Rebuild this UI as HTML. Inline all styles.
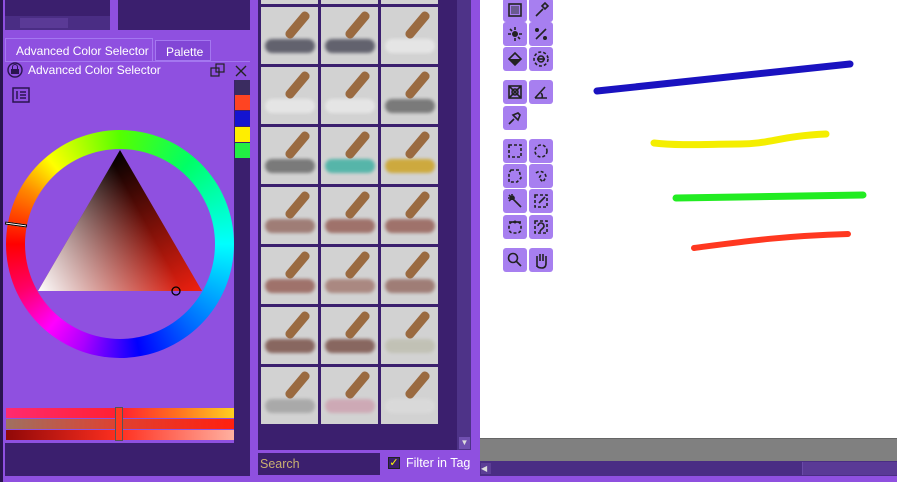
<!DOCTYPE html>
<html><head><meta charset="utf-8"><style>
*{margin:0;padding:0;box-sizing:border-box}
body{width:897px;height:482px;overflow:hidden;background:#8f50e0;position:relative;font-family:"Liberation Sans","DejaVu Sans",sans-serif}
.a{position:absolute}
.dk{background:#3b1f6e}
.tile{position:absolute;width:57px;height:57px;background:#d2d2d2;overflow:hidden}
.tb{position:absolute;width:24px;height:24px;background:#a77ff0;border-radius:3px}
.tb svg{position:absolute;left:3px;top:3px}
</style></head><body>
<div class="a" style="left:0;top:0;width:3px;height:482px;background:#2a1450"></div>
<div class="a dk" style="left:5px;top:0;width:105px;height:16px"></div>
<div class="a" style="left:5px;top:16px;width:105px;height:14px;background:#4a2d84"></div>
<div class="a" style="left:20px;top:18px;width:48px;height:10px;background:#5a3a96"></div>
<div class="a dk" style="left:118px;top:0;width:132px;height:30px"></div>
<div class="a" style="left:5px;top:38px;width:148px;height:24px;background:#8f50e0;border:1px solid #a477f0;border-bottom:none;color:#fff;font-size:12px;padding:5px 0 0 10px;white-space:nowrap">Advanced Color Selector</div>
<div class="a" style="left:155px;top:40px;width:56px;height:21px;background:#8246d6;border:1px solid #a477f0;color:#fff;font-size:12px;padding:4px 0 0 10px;white-space:nowrap">Palette</div>
<div class="a" style="left:5px;top:61px;width:245px;height:1px;background:#a477f0"></div>
<svg class="a" style="left:5px;top:61px" width="20" height="20"><circle cx="10" cy="9" r="7" fill="none" stroke="#2a1450" stroke-width="1.4"/><rect x="6" y="8" width="8" height="5" fill="#2a1450"/><path d="M7.5 8V6a2.5 2.5 0 015 0v2" fill="none" stroke="#2a1450"/></svg>
<div class="a" style="left:28px;top:63px;color:#fff;font-size:12px;white-space:nowrap">Advanced Color Selector</div>
<svg class="a" style="left:210px;top:63px" width="16" height="14"><rect x="1" y="5" width="8" height="8" fill="none" stroke="#222" stroke-width="1.2"/><rect x="6" y="1" width="8" height="8" fill="none" stroke="#222" stroke-width="1.2"/></svg>
<svg class="a" style="left:234px;top:64px" width="14" height="14"><path d="M2 2L12 12M12 2L2 12" stroke="#222" stroke-width="1.4"/></svg>
<svg class="a" style="left:12px;top:87px" width="18" height="16"><rect x="1" y="1" width="16" height="14" fill="none" stroke="#2a1450" stroke-width="1.5"/><path d="M5 4v8M8 5h6M8 8h6M8 11h6" stroke="#2a1450" stroke-width="1.5"/></svg>
<div class="a dk" style="left:234px;top:80px;width:16px;height:365px"></div>
<div class="a" style="left:235px;top:80px;width:15px;height:15px;background:#3a2c60"></div>
<div class="a" style="left:235px;top:95px;width:15px;height:15px;background:#ff4422"></div>
<div class="a" style="left:235px;top:111px;width:15px;height:15px;background:#1414d0"></div>
<div class="a" style="left:235px;top:127px;width:15px;height:15px;background:#ffee00"></div>
<div class="a" style="left:235px;top:143px;width:15px;height:15px;background:#22ee44"></div>
<div class="a" style="left:6px;top:130px;width:228px;height:228px;border-radius:50%;background:conic-gradient(from 0deg,#5f0 0deg,#0f6 40deg,#0ff 90deg,#06f 140deg,#00f 170deg,#a0f 200deg,#f0f 220deg,#f06 245deg,#f00 270deg,#f80 300deg,#ff0 320deg,#af0 340deg,#5f0 360deg)"></div>
<div class="a" style="left:25px;top:149px;width:190px;height:190px;border-radius:50%;background:#8f50e0"></div>
<div class="a" style="left:5px;top:223px;width:22px;height:3px;background:#fff;transform:rotate(8deg);border:1px solid #000"></div>
<svg class="a" style="left:0;top:0" width="250" height="400">
<defs>
<linearGradient id="g1" x1="120" y1="150" x2="202" y2="291" gradientUnits="userSpaceOnUse"><stop offset="0" stop-color="#000"/><stop offset="1" stop-color="#f02010"/></linearGradient>
<linearGradient id="g2" x1="38" y1="291" x2="150" y2="230" gradientUnits="userSpaceOnUse"><stop offset="0" stop-color="#fff"/><stop offset="1" stop-color="#fff" stop-opacity="0"/></linearGradient>
</defs>
<polygon points="120,150 38,291 202,291" fill="url(#g1)"/>
<polygon points="120,150 38,291 202,291" fill="url(#g2)"/>
<circle cx="176" cy="291" r="4" fill="none" stroke="#000" stroke-width="1.3"/>
</svg>
<div class="a" style="left:6px;top:408px;width:228px;height:10px;background:linear-gradient(90deg,#ff2a70,#ff2030 50%,#ff7020 75%,#ffd020)"></div>
<div class="a" style="left:6px;top:419px;width:228px;height:10px;background:linear-gradient(90deg,#a07060,#e04030 50%,#ff2010)"></div>
<div class="a" style="left:6px;top:430px;width:228px;height:10px;background:linear-gradient(90deg,#900808,#ff3020 50%,#ffb0a0)"></div>
<div class="a" style="left:115px;top:407px;width:8px;height:34px;border:1px solid #555;background:#ff3a20"></div>
<div class="a dk" style="left:5px;top:443px;width:245px;height:33px"></div>
<div class="a dk" style="left:258px;top:0;width:199px;height:450px"></div>
<div class="a" style="left:457px;top:0;width:14px;height:450px;background:#4e3388"></div>
<div class="a" style="left:459px;top:437px;width:11px;height:12px;background:#7050b0;color:#ddd;font-size:8px;text-align:center;line-height:12px">▼</div>
<div id="tiles"></div>
<div class="a dk" style="left:258px;top:453px;width:122px;height:22px;color:#c9b070;font-size:12.5px;padding:4px 0 0 2px">Search</div>
<div class="a" style="left:388px;top:457px;width:12px;height:12px;background:#3b1f6e;border:1px solid #222;color:#ff0;font-size:11px;line-height:10px;text-align:center">✓</div>
<div class="a" style="left:406px;top:456px;color:#fff;font-size:12.5px">Filter in Tag</div>
<div class="a" style="left:480px;top:0;width:417px;height:438px;background:#fff"></div>
<div class="a" style="left:480px;top:438px;width:417px;height:23px;background:#808080;border-top:1px solid #666"></div>
<div class="a" style="left:480px;top:461px;width:417px;height:15px;background:#4a2d84"></div>
<div class="a" style="left:481px;top:463px;width:10px;height:11px;background:#5c3e96;color:#ddd;font-size:8px;line-height:11px">◀</div>
<div class="a" style="left:802px;top:462px;width:95px;height:13px;background:#5a3a96;border-left:1px solid #6a4aa8"></div>
<svg class="a" style="left:480px;top:0" width="417" height="438">
<path d="M117 91 L370 64" stroke="#1a12c0" stroke-width="7" stroke-linecap="round"/>
<path d="M174 143 C200 146 230 144 260 144 S300 136 346 134" stroke="#f4ee00" stroke-width="7" fill="none" stroke-linecap="round"/>
<path d="M196 198 L383 195" stroke="#22ec22" stroke-width="7" stroke-linecap="round"/>
<path d="M214 248 C260 242 300 236 368 234" stroke="#ff3820" stroke-width="6" fill="none" stroke-linecap="round"/>
</svg>
<div id="tools"></div>
<script>
var t=document.getElementById('tiles'),h='';
var cols=['#8060b0','#8060b0','#777','#334','#334','#eee','#eee','#eee','#555','#555','#2a9','#c90','#8a5a50','#8a4a40','#8a4a40','#8a4a40','#9a6a60','#8a5a50','#6a3a30','#6a3a30','#bba','#999','#c9a','#ddd'];
for(var r=0;r<8;r++)for(var c=0;c<3;c++){var i=r*3+c;var x=261+c*60,y=-53+r*60;
h+='<div class="tile" style="left:'+x+'px;top:'+y+'px"><div class="a" style="left:4px;top:32px;width:50px;height:14px;border-radius:7px;background:'+cols[i%cols.length]+';opacity:.7;filter:blur(1.5px)"></div><div class="a" style="left:32px;top:2px;width:9px;height:32px;border-radius:4px;background:#9a6a40;transform:rotate(40deg)"></div></div>';}
t.innerHTML=h;
var S='stroke="#222" stroke-width="1.6" fill="none"',D='stroke-dasharray="3 2"';
var icons=[
'<rect x="3" y="3" width="12" height="12" '+S+'/><rect x="5" y="5" width="8" height="8" fill="#6a5a90"/>',
'<path d="M4 15L11 8M10 5l3-3 3 3-3 3z" '+S+'/>',
'<circle cx="9" cy="9" r="3" fill="#222"/><path d="M9 2v3M9 13v3M2 9h3M13 9h3M4 4l2 2M12 12l2 2" '+S+' '+D+'/>',
'<path d="M4 14L14 4" '+S+' stroke-width="3"/><circle cx="5" cy="5" r="2" fill="#222"/><circle cx="13" cy="13" r="2" fill="#222"/>',
'<path d="M3 9l6-6 6 6-6 6z" '+S+'/><path d="M3 9h12l-6 6z" fill="#222"/>',
'<circle cx="9" cy="9" r="7" '+S+' '+D+'/><path d="M5 9h8" '+S+'/><circle cx="9" cy="9" r="3" '+S+'/>',
'<rect x="3" y="3" width="12" height="12" '+S+'/><path d="M3 3l12 12M15 3L3 15" '+S+'/><circle cx="9" cy="9" r="3" '+S+'/>',
'<path d="M3 15h12M3 15L13 4M9 10a5 5 0 011 5" '+S+'/>',
'<path d="M3 15l5-5M7 6l5 5 2-5-2-2z" '+S+' fill="#222"/>',
'<rect x="3" y="3" width="12" height="12" '+S+' '+D+'/>',
'<circle cx="9" cy="9" r="6" '+S+' '+D+'/>',
'<path d="M5 3h8l2 8-4 4H3V6z" '+S+' '+D+'/>',
'<path d="M4 6a6 6 0 0110 4l-3 5-4-4 2-3" '+S+' '+D+'/>',
'<path d="M3 3l12 12M6 2v6M2 6h7M3 9l5-5" '+S+'/>',
'<rect x="3" y="3" width="12" height="12" '+S+' '+D+'/><path d="M7 11l6-6" '+S+' stroke-width="2.5"/>',
'<rect x="3" y="4" width="12" height="11" rx="4" '+S+' '+D+'/><path d="M3 4h12" '+S+'/><circle cx="9" cy="4" r="1.5" fill="#222"/>',
'<rect x="3" y="3" width="12" height="12" '+S+' '+D+'/><path d="M6 8a3 3 0 016 0c0 3-4 3-4 6" '+S+'/>',
'<circle cx="7" cy="7" r="4.5" '+S+' stroke-width="2"/><path d="M10 10l5 5" '+S+' stroke-width="2.5"/>',
'<path d="M5 16V8M5 10V5M8 10V3M11 10V3M14 10V5M5 14c0 2 2 3 5 3s4-2 4-5V9" '+S+' stroke-width="2"/>'];
var pos=[[503,-2],[529,-2],[503,22],[529,22],[503,47],[529,47],[503,80],[529,80],[503,106],[503,139],[529,139],[503,164],[529,164],[503,189],[529,189],[503,215],[529,215],[503,248],[529,248]];
var g='';
pos.forEach(function(p,i){g+='<div class="tb" style="left:'+p[0]+'px;top:'+p[1]+'px"><svg width="18" height="18">'+icons[i]+'</svg></div>';});
document.getElementById('tools').innerHTML=g;
</script>
</body></html>
